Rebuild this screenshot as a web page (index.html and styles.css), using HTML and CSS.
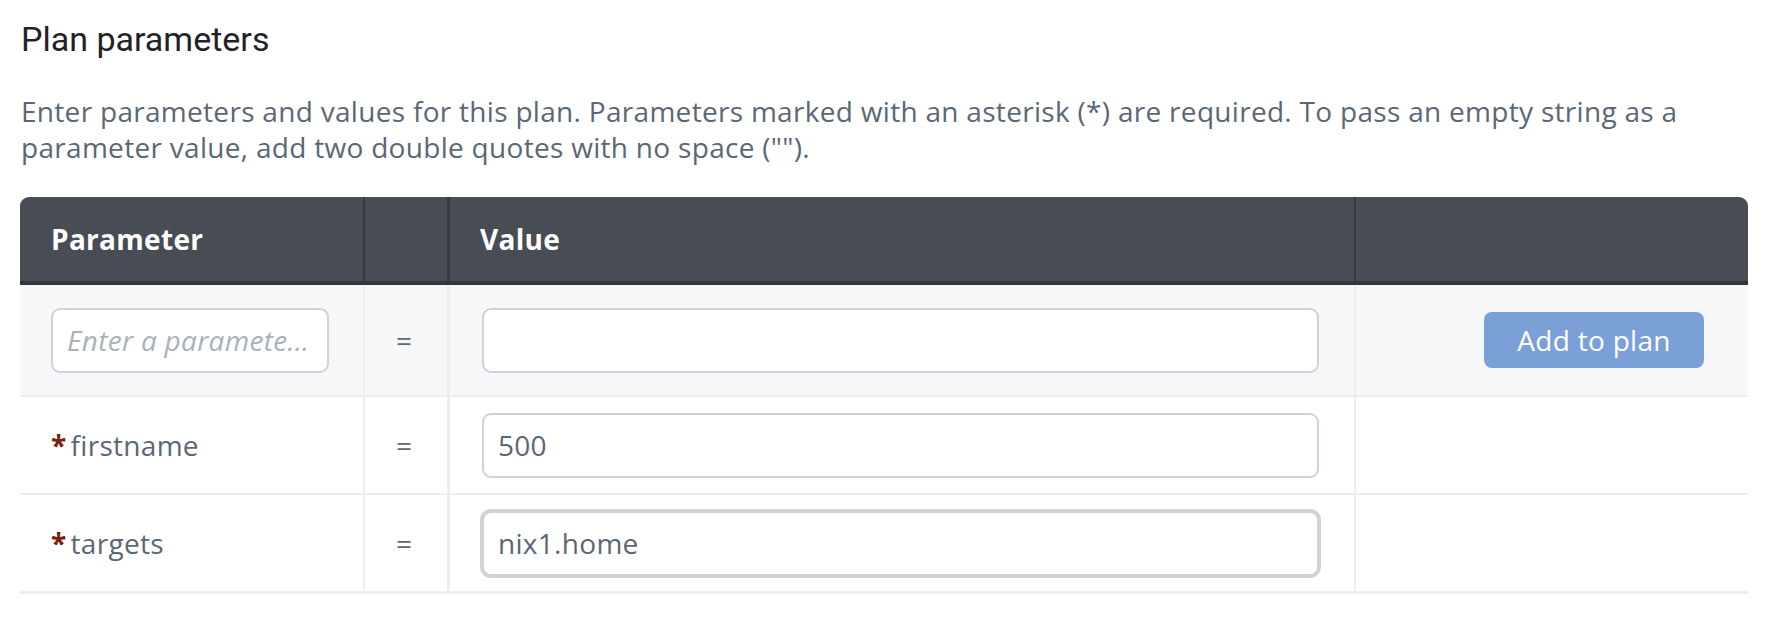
FILE: index.html
```html
<!DOCTYPE html>
<html lang="en">
<head>
<meta charset="utf-8">
<title>Plan parameters</title>
<link rel="stylesheet" href="styles.css">
</head>
<body>
<section class="panel">
  <h2 class="title">Plan parameters</h2>
  <p class="intro">Enter parameters and values for this plan. Parameters marked with an asterisk (*) are required. To pass an empty string as a parameter value, add two double quotes with no space ("").</p>
  <div class="table">
    <div class="row head">
      <div class="cell c1">Parameter</div>
      <div class="cell c2"></div>
      <div class="cell c3">Value</div>
      <div class="cell c4"></div>
    </div>
    <div class="row add">
      <div class="cell c1"><input class="field" type="text" placeholder="Enter a paramete..."></div>
      <div class="cell c2">=</div>
      <div class="cell c3"><input class="field" type="text"></div>
      <div class="cell c4"><button class="btn" type="button">Add to plan</button></div>
    </div>
    <div class="row">
      <div class="cell c1"><span class="req">*</span>firstname</div>
      <div class="cell c2">=</div>
      <div class="cell c3"><input class="field" type="text" value="500"></div>
      <div class="cell c4"></div>
    </div>
    <div class="row last">
      <div class="cell c1"><span class="req">*</span>targets</div>
      <div class="cell c2">=</div>
      <div class="cell c3"><input class="field focused" type="text" value="nix1.home"></div>
      <div class="cell c4"></div>
    </div>
  </div>
</section>
</body>
</html>
```

FILE: styles.css
```css
* { box-sizing: border-box; }

html, body {
  margin: 0;
  background: #ffffff;
}

body {
  padding: 0 32px 0 20px;
  font-family: "Open Sans", "Liberation Sans", sans-serif;
  font-size: 28px;
  letter-spacing: 0.3px;
  color: #5b6776;
}

.title {
  margin: 19px 0 0 1px;
  font-family: Roboto, "Liberation Sans", sans-serif;
  font-weight: 400;
  font-size: 34px;
  line-height: 40px;
  letter-spacing: 0;
  color: #1f2328;
}

.intro {
  margin: 34px 0 0 1px;
  line-height: 36px;
  color: #5b6776;
}

.table {
  margin-top: 32px;
  width: 1728px;
}

.row {
  display: grid;
  grid-template-columns: 345px 85px 906px 1fr;
  height: 98px;
  border-bottom: 2px solid #eceef0;
  background: #ffffff;
}

.row.last {
  height: 99px;
  border-bottom-width: 3px;
}

.row.head {
  height: 88px;
  background: #484c54;
  border-bottom: 4px solid #33363b;
  border-radius: 9px 9px 0 0;
  color: #ffffff;
  font-weight: 700;
}

.row.add {
  height: 112px;
  background: #f6f7f9;
}

.cell {
  display: flex;
  align-items: center;
  min-width: 0;
}

.c1 {
  padding: 0 34px 0 31px;
  border-right: 2px solid #eceef0;
}

.c2 {
  padding: 0 0 0 31px;
  border-right: 3px solid #eceef0;
}

.c3 {
  padding: 0 35px 0 32px;
  border-right: 2px solid #eceef0;
}

.head .c3 {
  padding-left: 30px;
}

.c4 {
  justify-content: flex-end;
  padding: 0 44px 0 0;
}

.head .c1,
.head .c2,
.head .c3 {
  border-right-color: #35383d;
}

.field {
  width: 100%;
  height: 65px;
  padding: 0 14px;
  border: 2px solid #cdd3d8;
  border-radius: 9px;
  background: #ffffff;
  font-family: "Open Sans", "Liberation Sans", sans-serif;
  font-size: 28px;
  letter-spacing: 0.3px;
  color: #5b6776;
}

.field::placeholder {
  color: #a9b1b9;
  font-style: italic;
}

.field.focused {
  outline: 3px solid #cdd3d8;
  outline-offset: -1px;
}

.req {
  color: #7a1e0d;
  font-weight: 700;
  margin-right: 4px;
}

.btn {
  width: 220px;
  height: 56px;
  padding: 0;
  border: none;
  border-radius: 8px;
  background: #7b9fd7;
  color: #ffffff;
  font-family: "Open Sans", "Liberation Sans", sans-serif;
  font-size: 28px;
  letter-spacing: 0.3px;
}
```
